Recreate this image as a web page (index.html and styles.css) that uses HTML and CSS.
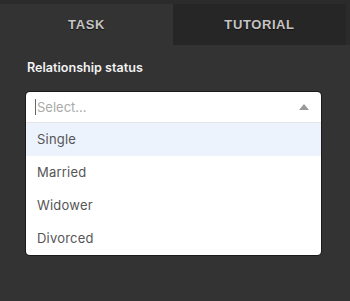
FILE: index.html
```html
<!DOCTYPE html>
<html>
<head>
<meta charset="utf-8">
<link rel="stylesheet" href="styles.css">
</head>
<body>
<div class="panel">
  <div class="tabs">
    <div class="tab active">TASK</div>
    <div class="tab">TUTORIAL</div>
  </div>
  <div class="content">
    <div class="label">Relationship status</div>
    <div class="select">
      <div class="control">
        <span class="caret"></span><span class="placeholder">Select...</span>
        <svg class="arrow" width="10" height="6" viewBox="0 0 10 6"><path d="M0 6 L5 0 L10 6 Z" fill="#999"/></svg>
      </div>
      <div class="menu">
        <div class="option focused">Single</div>
        <div class="option">Married</div>
        <div class="option">Widower</div>
        <div class="option">Divorced</div>
      </div>
    </div>
  </div>
</div>
</body>
</html>
```
FILE: styles.css
```css
html, body {
  margin: 0;
  padding: 0;
  background: #333333;
  width: 350px;
  height: 301px;
  overflow: hidden;
}
.panel {
  width: 350px;
  height: 301px;
  background: #333333;
}
.tabs {
  display: flex;
  background: #2b2b2b;
  padding-top: 4px;
  padding-right: 4px;
}
.tab {
  flex: 1;
  height: 41px;
  display: flex;
  align-items: center;
  justify-content: center;
  font-family: "Liberation Sans", Arial, sans-serif;
  font-weight: bold;
  font-size: 13px;
  letter-spacing: 0.6px;
  color: #c4c4c4;
  text-shadow: 0 1px 1px #111;
  background: #262626;
}
.tab.active {
  background: #333333;
}
.content {
  padding: 14px 29px 0 26px;
}
.label {
  font-family: Inter, "Open Sans", sans-serif;
  font-weight: 600;
  font-size: 12.6px;
  color: #f2f2f2;
  padding-left: 1px;
  line-height: 18px;
  height: 18px;
}
.select {
  margin-top: 15px;
  background: #fff;
  border-radius: 4px;
  box-shadow: 0 0 0 1px #1a1a1a;
  font-family: Inter, "Open Sans", sans-serif;
  font-size: 13px;
}
.control {
  height: 30px;
  display: flex;
  align-items: center;
  padding: 0 12px 0 9px;
  border-bottom: 1px solid #e6e6e6;
}
.caret {
  width: 1px;
  height: 16px;
  background: #666;
  margin-right: 1px;
}
.placeholder {
  color: #aaaaaa;
  flex: 1;
}
.arrow {
  display: block;
}
.menu {
  border-radius: 0 0 4px 4px;
  overflow: hidden;
}
.option {
  height: 33px;
  line-height: 33px;
  padding-left: 11px;
  color: #555555;
  letter-spacing: 0.2px;
}
.option.focused {
  background: #edf3fd;
}
```
